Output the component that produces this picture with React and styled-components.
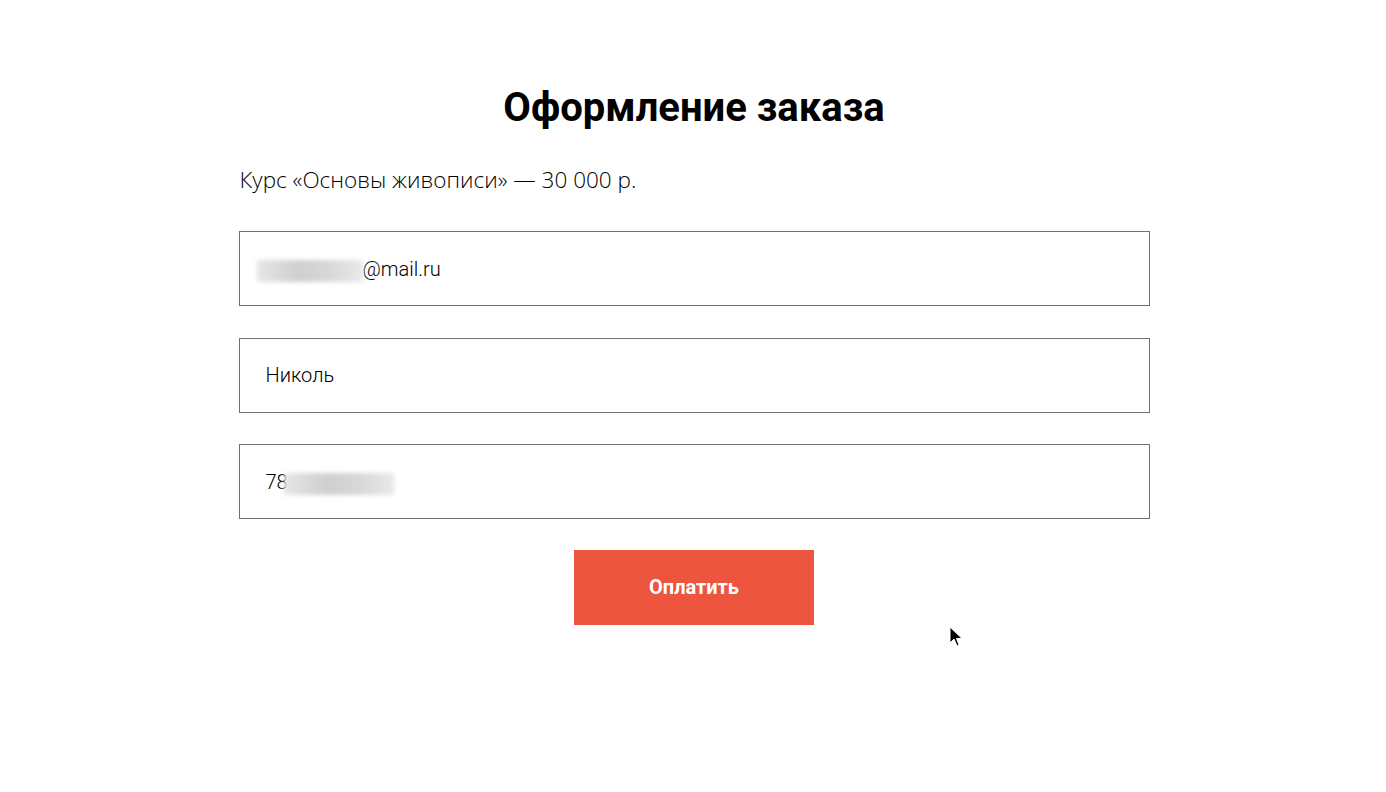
import React from "react";
import styled, { createGlobalStyle } from "styled-components";

const GlobalStyle = createGlobalStyle`
  body {
    margin: 0;
    background: #ffffff;
    font-family: Roboto, "Liberation Sans", sans-serif;
  }
`;

const App = () => {
  return (
    <>
      <GlobalStyle />
      <Page>
        <CheckoutWrapper>
          <Title>Оформление заказа</Title>
          <Product>Курс «Основы живописи» — 30 000 р.</Product>
          <Form onSubmit={(e) => e.preventDefault()}>
            <Field>
              <Hidden $width={106} $shift={-9} />
              @mail.ru
            </Field>
            <Field>Николь</Field>
            <Field>
              78
              <Hidden $width={110} $shift={-4} />
            </Field>
            <PayButton type="submit">Оплатить</PayButton>
          </Form>
        </CheckoutWrapper>
        <Cursor width="16" height="22" viewBox="0 0 16 22">
          <path d="M1 1 L1 17 L5 13 L8 20 L10 19 L7.5 12.5 L13 12.5 Z" fill="#000" stroke="#fff" strokeWidth="1" />
        </Cursor>
      </Page>
    </>
  );
};

const Page = styled.div`
  position: relative;
  min-height: 792px;
  display: flex;
  justify-content: center;
  padding-left: 2px;
  box-sizing: border-box;
`;

const CheckoutWrapper = styled.div`
  width: 911px;
  padding-top: 84px;
  display: flex;
  flex-direction: column;
`;

const Title = styled.h1`
  margin: 0;
  font-family: Roboto, "Liberation Sans", sans-serif;
  font-weight: 700;
  font-size: 40px;
  line-height: 48px;
  color: #000;
  text-align: center;
`;

const Product = styled.p`
  margin: 33px 0 0 1px;
  font-family: "Open Sans", "Liberation Sans", sans-serif;
  font-weight: 300;
  font-size: 22.5px;
  line-height: 30px;
  color: #000;
`;

const Form = styled.form`
  margin-top: 36px;
  display: flex;
  flex-direction: column;
  gap: 31.5px;
`;

const Field = styled.div`
  box-sizing: border-box;
  height: 75px;
  border: 1px solid #6f6f6f;
  padding: 0 26px;
  display: flex;
  align-items: center;
  font-family: Roboto, "Liberation Sans", sans-serif;
  font-weight: 300;
  font-size: 20px;
  color: #000;
`;

const Hidden = styled.span`
  display: inline-block;
  width: ${(p) => p.$width}px;
  height: 22px;
  background: linear-gradient(90deg, #e6e6e6, #cfcfcf 40%, #d9d9d9 70%, #e9e9e9);
  filter: blur(2px);
  margin: 0 0 -4px ${(p) => p.$shift}px;
`;

const PayButton = styled.button`
  align-self: center;
  width: 240px;
  height: 75px;
  margin-top: -1px;
  border: none;
  background: #ed553f;
  color: #fff;
  font-family: Roboto, "Liberation Sans", sans-serif;
  font-weight: 700;
  font-size: 20px;
  cursor: pointer;
`;

const Cursor = styled.svg`
  position: absolute;
  left: 949px;
  top: 626px;
`;

export default App;
